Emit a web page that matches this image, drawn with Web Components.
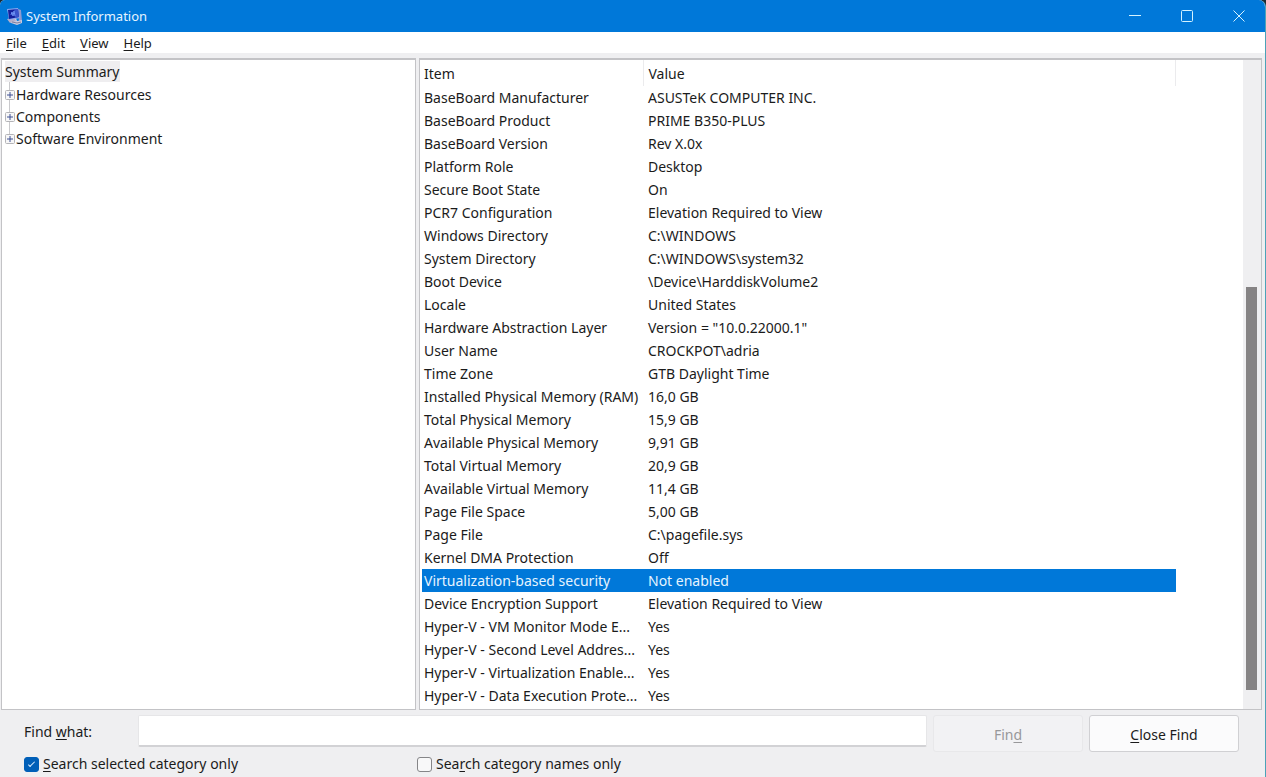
<!DOCTYPE html>
<html lang="en">
<head>
<meta charset="utf-8">
<title>System Information</title>
<style>
  html { background: #1b2a33; }
  body { margin: 0; font: 14px/20px "Noto Sans", "Open Sans", sans-serif; color: #1b1b1b; }
</style>
</head>
<body>
<system-window></system-window>

<template id="t-title">
  <style>
    :host { display: flex; align-items: center; height: 32px; background: #0078d9; color: #e6f4ff; }
    .icon { width: 18px; height: 18px; margin-left: 6px; flex: none; }
    h1 { flex: 1; margin: 0 0 0 2px; font: inherit; font-size: 13px; }
    button { width: 52px; height: 32px; padding: 0; border: 0; background: none; color: inherit; display: grid; place-items: center; }
    svg { display: block; }
    .controls { display: flex; }
  </style>
  <svg class="icon" viewBox="0 0 18 18" aria-hidden="true">
    <path d="M12 2l3 1 1 11-3 1z" fill="#8f9ad0"/>
    <path d="M5 12l5-1 1 3 5-1v3l-5 2-6-2z" fill="#c9cbe0"/>
    <path d="M1 12l7-1 2 3-6 2z" fill="#b3aec9"/>
    <path d="M1 2l11-1 2 10-11 2z" fill="#8fa8ee"/>
    <path d="M2 3l10-1 1 8-10 2z" fill="#14209c"/>
    <path d="M8 2l4 0 1 8-4 1z" fill="#3a55cc"/>
    <path d="M5 8l1-3 1 4 1-5 1 5" fill="none" stroke="#6f93f5"/>
    <path d="M6 15l5 1 4-1" fill="none" stroke="#7d7f9e"/>
  </svg>
  <h1><slot></slot></h1>
  <div class="controls">
    <button aria-label="Minimize"><svg width="12" height="12"><path d="M0 5.5h12" stroke="#d5f3ff"/></svg></button>
    <button aria-label="Maximize"><svg width="12" height="12"><rect x=".5" y=".5" width="11" height="11" rx="1" fill="none" stroke="#d5f3ff"/></svg></button>
    <button aria-label="Close"><svg width="12" height="12"><path d="M.5.5l11 11M11.5.5l-11 11" stroke="#d5f3ff"/></svg></button>
  </div>
</template>

<template id="t-menu">
  <style>
    :host { display: block; background: #fff; }
    nav { display: flex; gap: 15px; height: 21px; padding: 0 6px; align-items: center; }
    button { border: 0; padding: 0; background: none; font: inherit; font-size: 13px; line-height: 20px; color: inherit; }
    u { text-underline-offset: 2px; }
  </style>
  <nav aria-label="Menu">
    <button><u>F</u>ile</button><button><u>E</u>dit</button><button><u>V</u>iew</button><button><u>H</u>elp</button>
  </nav>
</template>

<template id="t-tree">
  <style>
    :host { display: block; background: #fff; border: 1px solid #c3c3c6; border-top-width: 2px; padding: 1px 0 0 3px; }
    ul { list-style: none; margin: 0; padding: 0; }
    button { border: 0; padding: 0; background: none; font: inherit; color: inherit; text-align: left; white-space: nowrap; }
    .root { background: #efeef0; height: 21px; padding: 0; display: block; }
    li li { display: flex; align-items: center; height: 22px; }
    li ul { padding-top: 2px; background: linear-gradient(#c9c9cc, #c9c9cc) 4px 0 / 1px 56px no-repeat; }
    .box { width: 10px; height: 10px; flex: none; margin-right: 1px; display: block; }
  </style>
  <ul><li><button class="root">System Summary</button><ul></ul></li></ul>
</template>

<template id="t-list">
  <style>
    :host { display: grid; grid-template-columns: minmax(0, 1fr) 18px; background: #fff; border: 1px solid #c3c3c6; border-top-width: 2px; }
    table { table-layout: fixed; border-collapse: collapse; width: calc(100% - 69px); margin-left: 2px; }
    .c1 { width: 221px; }
    th { font-weight: normal; text-align: left; height: 26px; border-right: 1px solid #ebebed; padding: 2px 2px 0; box-sizing: border-box; }
    th + th { padding-left: 5px; }
    td { height: 23px; padding: 0 2px; white-space: nowrap; box-sizing: border-box; line-height: 20px; }
    td + td { padding-left: 5px; }
    .sel { background: #0078d9; color: #e6f4ff; }
    .track { background: #efeff1; display: grid; grid-template-rows: 227fr 402fr 19fr; }
    .track i { grid-row: 2; width: 11px; margin-left: 3px; background: #858384; }
  </style>
  <div><table>
    <colgroup><col class="c1"><col></colgroup>
    <thead><tr><th scope="col">Item</th><th scope="col">Value</th></tr></thead>
    <tbody></tbody>
  </table></div>
  <div class="track"><i></i></div>
</template>

<template id="t-find">
  <style>
    :host { display: block; padding: 5px 26px 2px 24px; height: 60px; }
    .row { display: flex; align-items: flex-start; }
    .what { width: 114px; flex: none; line-height: 34px; }
    input[type=text] { flex: 1; min-width: 0; height: 32px; box-sizing: border-box; border: 1px solid #e6e6e8; border-bottom: 2px solid #d2d2d5; border-radius: 2px; background: #fff; font: inherit; padding: 0 6px; outline: 0; }
    button { width: 150px; height: 37px; flex: none; box-sizing: border-box; margin-left: 6px; padding: 2px 0 0; border: 1px solid #d0d0d3; border-radius: 3px; background: #fbfbfc; font: inherit; color: inherit; }
    button:disabled { border-color: #e8e8ea; background: #f2f2f4; color: #98989a; }
    .checks { display: grid; grid-template-columns: minmax(0, 393fr) minmax(0, 822fr); margin-top: 2px; }
    label.c { display: flex; align-items: center; height: 20px; white-space: nowrap; }
    input[type=checkbox] { appearance: none; flex: none; width: 15px; height: 15px; box-sizing: border-box; margin: 0 4px 0 0; border: 1px solid #858588; border-radius: 3px; background: #f8f8f9; display: grid; place-items: center; }
    input:checked { background: #005fb8; border-color: #005fb8; }
    input:checked::before { content: ""; width: 7px; height: 3px; box-sizing: border-box; border: solid #d5ecff; border-width: 0 0 1px 1px; transform: translateY(-1px) rotate(-45deg); }
    u { text-underline-offset: 2px; }
  </style>
  <div class="row">
    <label class="what" for="q">Find <u>w</u>hat:</label>
    <input type="text" id="q">
    <button disabled>Fin<u>d</u></button>
    <button><u>C</u>lose Find</button>
  </div>
  <div class="checks">
    <label class="c"><input type="checkbox" checked><span><u>S</u>earch selected category only</span></label>
    <label class="c"><input type="checkbox"><span>Sea<u>r</u>ch category names only</span></label>
  </div>
</template>

<template id="t-window">
  <style>
    :host { display: flex; flex-direction: column; min-height: 100vh; box-sizing: border-box; background: #efeff1; border-right: 1px solid #4ba3b8; border-radius: 5px 7px 0 0; overflow: hidden; }
    main { flex: 1; display: grid; grid-template-columns: minmax(0, 415fr) minmax(0, 843fr); gap: 3px; padding: 5px 3px 0 1px; }
  </style>
  <title-bar>System Information</title-bar>
  <menu-bar></menu-bar>
  <main><category-tree></category-tree><detail-list></detail-list></main>
  <find-bar></find-bar>
</template>

<script>
  class Base extends HTMLElement {
    constructor() {
      super();
      this.attachShadow({ mode: "open" })
        .append(document.getElementById(this.constructor.tpl).content.cloneNode(true));
    }
  }
  class TitleBar extends Base { static tpl = "t-title"; }
  class MenuBar extends Base { static tpl = "t-menu"; }
  class FindBar extends Base { static tpl = "t-find"; }
  class CategoryTree extends Base {
    static tpl = "t-tree";
    connectedCallback() {
      this.shadowRoot.querySelector("li ul").innerHTML =
        ["Hardware Resources", "Components", "Software Environment"].map(t =>
          `<li><svg class="box" viewBox="0 0 10 10" aria-hidden="true"><rect x=".5" y=".5" width="9" height="9" rx="1" fill="#f7f7f8" stroke="#b4b4b8"/><path d="M2 5h6M5 2v6" stroke="#3c4f92"/></svg><button>${t}</button></li>`).join("");
    }
  }
  const ROWS = [
    ["BaseBoard Manufacturer", "ASUSTeK COMPUTER INC."],
    ["BaseBoard Product", "PRIME B350-PLUS"],
    ["BaseBoard Version", "Rev X.0x"],
    ["Platform Role", "Desktop"],
    ["Secure Boot State", "On"],
    ["PCR7 Configuration", "Elevation Required to View"],
    ["Windows Directory", "C:\\WINDOWS"],
    ["System Directory", "C:\\WINDOWS\\system32"],
    ["Boot Device", "\\Device\\HarddiskVolume2"],
    ["Locale", "United States"],
    ["Hardware Abstraction Layer", "Version = \"10.0.22000.1\""],
    ["User Name", "CROCKPOT\\adria"],
    ["Time Zone", "GTB Daylight Time"],
    ["Installed Physical Memory (RAM)", "16,0 GB"],
    ["Total Physical Memory", "15,9 GB"],
    ["Available Physical Memory", "9,91 GB"],
    ["Total Virtual Memory", "20,9 GB"],
    ["Available Virtual Memory", "11,4 GB"],
    ["Page File Space", "5,00 GB"],
    ["Page File", "C:\\pagefile.sys"],
    ["Kernel DMA Protection", "Off"],
    ["Virtualization-based security", "Not enabled"],
    ["Device Encryption Support", "Elevation Required to View"],
    ["Hyper-V - VM Monitor Mode E...", "Yes"],
    ["Hyper-V - Second Level Addres...", "Yes"],
    ["Hyper-V - Virtualization Enable...", "Yes"],
    ["Hyper-V - Data Execution Prote...", "Yes"]
  ];
  class DetailList extends Base {
    static tpl = "t-list";
    connectedCallback() {
      const body = this.shadowRoot.querySelector("tbody");
      for (const row of ROWS) {
        const tr = body.insertRow();
        if (row[0].startsWith("Virtualization")) tr.className = "sel";
        for (const text of row) tr.insertCell().textContent = text;
      }
    }
  }
  class SystemWindow extends Base { static tpl = "t-window"; }
  customElements.define("title-bar", TitleBar);
  customElements.define("menu-bar", MenuBar);
  customElements.define("find-bar", FindBar);
  customElements.define("category-tree", CategoryTree);
  customElements.define("detail-list", DetailList);
  customElements.define("system-window", SystemWindow);
</script>
</body>
</html>
